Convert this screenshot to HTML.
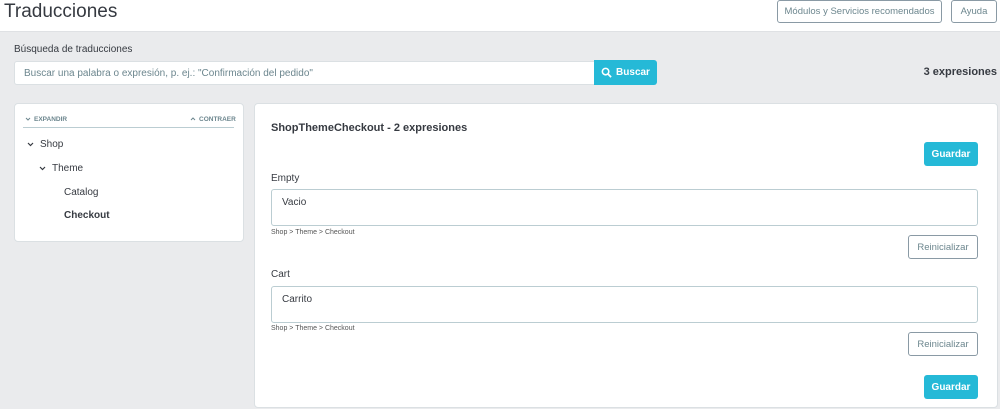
<!DOCTYPE html>
<html><head><meta charset="utf-8"><style>
*{box-sizing:border-box;margin:0;padding:0}
body{width:1000px;height:409px;overflow:hidden;background:#eaebed;font-family:"Liberation Sans",sans-serif;color:#363a41;position:relative}
.a{position:absolute}
.hdr{left:0;top:0;width:1000px;height:32px;background:#fff;border-bottom:1px solid #dfe1e4}
.btn{position:absolute;border:1px solid #8a9aa5;border-radius:3px;background:#fff;color:#6c868e;font-size:9.5px;display:flex;align-items:center;justify-content:center}
.pb{position:absolute;background:#25b9d7;color:#fff;font-weight:bold;font-size:10px;border-radius:3px;display:flex;align-items:center;justify-content:center}
.panel{background:#fff;border:1px solid #dbe0e3;border-radius:4px}
.ta{position:absolute;border:1px solid #bbcdd2;border-radius:3px;background:#fff;font-size:10px;padding:7px 10px}
.crumb{font-size:7px;color:#555}
</style></head><body>
<div class="a hdr"></div>
<div class="a" style="left:4px;top:1px;font-size:19px;color:#363a41">Traducciones</div>
<div class="btn" style="left:777px;top:0;width:165px;height:23px">Módulos y Servicios recomendados</div>
<div class="btn" style="left:951px;top:0;width:46px;height:23px">Ayuda</div>

<div class="a" style="left:14px;top:44px;font-size:10px">Búsqueda de traducciones</div>
<div class="a" style="left:14px;top:61px;width:582px;height:24px;background:#fff;border:1px solid #dbe0e3;border-radius:3px 0 0 3px;font-size:10px;color:#6c868e;padding:6px 9px">Buscar una palabra o expresión, p. ej.: "Confirmación del pedido"</div>
<div class="pb" style="left:594px;top:60px;width:63px;height:25px;border-radius:0 3px 3px 0">
<svg width="11" height="11" viewBox="0 0 12 12" style="margin-right:4px"><circle cx="5" cy="5" r="3.5" fill="none" stroke="#fff" stroke-width="1.7"/><path d="M7.5 7.5L11 11" stroke="#fff" stroke-width="1.9"/></svg>Buscar</div>
<div class="a" style="right:3px;top:66px;font-size:11px;font-weight:bold;color:#363a41">3 expresiones</div>

<div class="a panel" style="left:14px;top:103px;width:230px;height:139px"></div>
<svg class="a" style="left:25px;top:117px" width="6" height="4"><path d="M1 1l2 2 2-2" fill="none" stroke="#6c868e" stroke-width="1"/></svg>
<div class="a" style="left:34px;top:116px;font-size:6.5px;font-weight:bold;color:#6c868e">EXPANDIR</div>
<svg class="a" style="left:190px;top:117px" width="6" height="4"><path d="M1 3l2-2 2 2" fill="none" stroke="#6c868e" stroke-width="1"/></svg>
<div class="a" style="left:199px;top:116px;font-size:6.5px;font-weight:bold;color:#6c868e">CONTRAER</div>
<div class="a" style="left:23px;top:127px;width:211px;height:1px;background:#bbcdd2"></div>
<svg class="a" style="left:27px;top:142px" width="7" height="5"><path d="M1 1l2.5 2.5L6 1" fill="none" stroke="#363a41" stroke-width="1.2"/></svg>
<div class="a" style="left:40px;top:139px;font-size:10px">Shop</div>
<svg class="a" style="left:39px;top:166px" width="7" height="5"><path d="M1 1l2.5 2.5L6 1" fill="none" stroke="#363a41" stroke-width="1.2"/></svg>
<div class="a" style="left:52px;top:163px;font-size:10px">Theme</div>
<div class="a" style="left:64px;top:187px;font-size:10px">Catalog</div>
<div class="a" style="left:64px;top:210px;font-size:10px;font-weight:bold">Checkout</div>

<div class="a panel" style="left:254px;top:103px;width:744px;height:305px"></div>
<div class="a" style="left:271px;top:122px;font-size:11px;font-weight:bold">ShopThemeCheckout - 2 expresiones</div>
<div class="pb" style="left:924px;top:142px;width:54px;height:24px">Guardar</div>
<div class="a" style="left:271px;top:173px;font-size:10px">Empty</div>
<div class="ta" style="left:271px;top:189px;width:707px;height:37px">Vacio</div>
<div class="a crumb" style="left:271px;top:229px">Shop &gt; Theme &gt; Checkout</div>
<div class="btn" style="left:908px;top:235px;width:70px;height:24px">Reinicializar</div>
<div class="a" style="left:271px;top:269px;font-size:10px">Cart</div>
<div class="ta" style="left:271px;top:286px;width:707px;height:37px">Carrito</div>
<div class="a crumb" style="left:271px;top:325px">Shop &gt; Theme &gt; Checkout</div>
<div class="btn" style="left:908px;top:332px;width:70px;height:24px">Reinicializar</div>
<div class="pb" style="left:924px;top:375px;width:54px;height:24px">Guardar</div>
</body></html>
